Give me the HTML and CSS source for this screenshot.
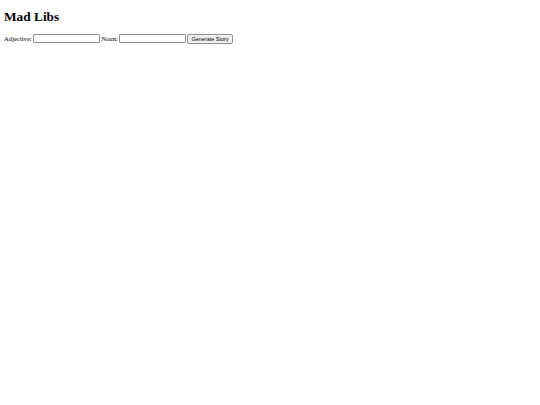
FILE: index.html
```html
<!DOCTYPE html>
<html>
<head>
<meta charset="utf-8">
<title>Mad Libs</title>
<link rel="stylesheet" href="styles.css">
</head>
<body>
<h1 class="title">Mad Libs</h1>
<form class="form">
<label class="lbl">Adjective: <input class="field" type="text"></label>
<label class="lbl">Noun: <input class="field" type="text"></label>
<button class="btn" type="button">Generate Story</button>
</form>
</body>
</html>
```
FILE: styles.css
```css
html, body { background: #fff; }
body {
  margin: 4px;
  font-family: "Liberation Serif", "Times New Roman", serif;
  font-size: 6.67px;
  color: #000;
}
.title {
  font-size: 13.33px;
  font-weight: bold;
  margin: 5px 0 8.9px;
}
.form {
  margin: 0;
  display: flex;
  align-items: center;
  gap: 1.5px;
}
.lbl { display: flex; align-items: center; gap: 1px; }
.field {
  width: 67px;
  height: 9px;
  box-sizing: border-box;
  border: 1px solid #8f8f8f;
  border-radius: 1px;
  padding: 0 1px;
  margin: 0;
  font-size: 6.67px;
}
.btn {
  height: 10px;
  box-sizing: border-box;
  padding: 0 3px;
  margin: 0;
  font-family: "Liberation Sans", Arial, sans-serif;
  font-size: 5.5px;
  background: #efefef;
  border: 1px solid #8f8f8f;
  border-radius: 2px;
  color: #000;
}
```
